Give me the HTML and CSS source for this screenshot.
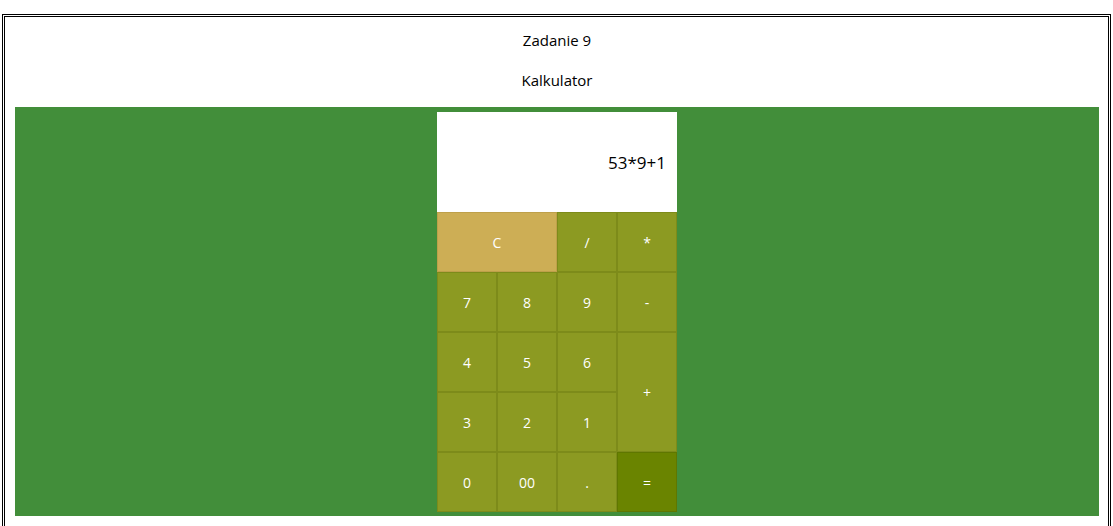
FILE: index.html
```html
<!DOCTYPE html>
<html lang="pl">
<head>
<meta charset="utf-8">
<title>Kalkulator</title>
<link rel="stylesheet" href="styles.css">
</head>
<body>
<div class="frame">
  <header class="head">
    <p>Zadanie 9</p>
    <p>Kalkulator</p>
  </header>
  <section class="stage">
    <div class="calc">
      <div class="display">53*9+1</div>
      <div class="keys">
        <div class="key clear wide">C</div>
        <div class="key">/</div>
        <div class="key">*</div>
        <div class="key">7</div>
        <div class="key">8</div>
        <div class="key">9</div>
        <div class="key">-</div>
        <div class="key">4</div>
        <div class="key">5</div>
        <div class="key">6</div>
        <div class="key tall">+</div>
        <div class="key">3</div>
        <div class="key">2</div>
        <div class="key">1</div>
        <div class="key">0</div>
        <div class="key">00</div>
        <div class="key">.</div>
        <div class="key equals">=</div>
      </div>
    </div>
  </section>
</div>
</body>
</html>
```

FILE: styles.css
```css
html, body {
  margin: 0;
  padding: 0;
  background: #fff;
}
body {
  font-family: "Open Sans", "Noto Sans", sans-serif;
  font-size: 14px;
  color: #000;
}
.frame {
  margin: 14px 2px 0 2px;
  border: 3px double #000;
  border-bottom: none;
  padding: 0 9px 10px 10px;
}
.head {
  display: flex;
  flex-direction: column;
  align-items: center;
  gap: 20px;
  padding: 13px 0 17px;
  font-size: 15px;
}
.head p {
  margin: 0;
  line-height: 20px;
}
.stage {
  background: #428e3a;
  display: flex;
  justify-content: center;
  padding: 5px 0 4px;
}
.calc {
  width: 240px;
}
.display {
  height: 100px;
  background: #fff;
  display: flex;
  align-items: center;
  justify-content: flex-end;
  padding-right: 11px;
  font-size: 17px;
  box-sizing: border-box;
}
.keys {
  display: grid;
  grid-template-columns: repeat(4, 60px);
  grid-auto-rows: 60px;
}
.key {
  background: #8c9a22;
  border: 1px solid #7d8b1a;
  color: #fff;
  display: flex;
  align-items: center;
  justify-content: center;
  font-size: 14px;
  box-sizing: border-box;
}
.wide {
  grid-column: span 2;
}
.tall {
  grid-row: span 2;
}
.clear {
  background: #cdae55;
  border-color: #bea04a;
}
.equals {
  background: #6a8400;
  border-color: #5f7700;
}
```
